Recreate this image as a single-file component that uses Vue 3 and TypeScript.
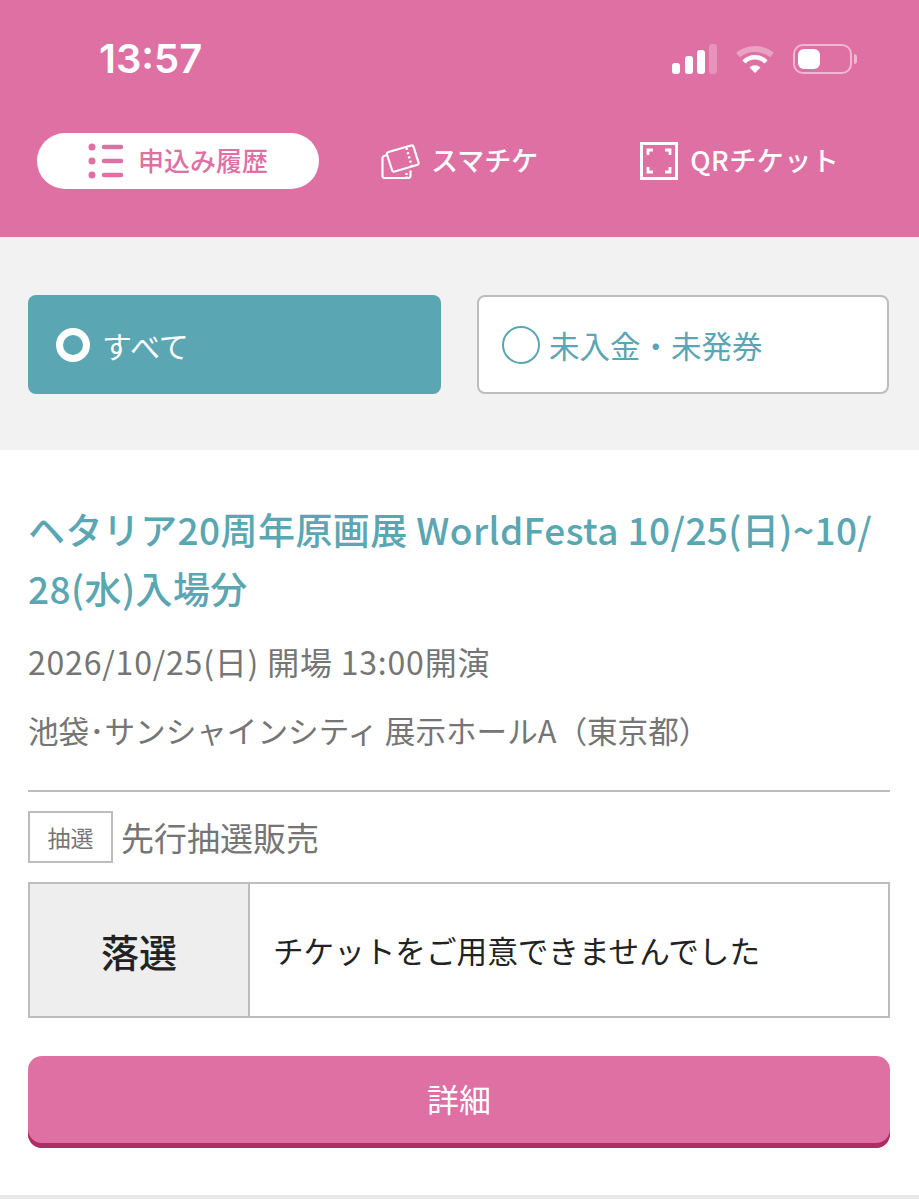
<script setup lang="ts">
const tabs = ['すべて', '未入金・未発券']
</script>

<template>
  <div class="page">
    <header class="head">
      <div class="status">
        <span class="time">13:57</span>
        <div class="status-icons">
          <svg width="45" height="30" viewBox="0 0 45 30">
            <rect x="0" y="19" width="8" height="11" rx="3" fill="#fff" />
            <rect x="13" y="12" width="8" height="18" rx="3" fill="#fff" />
            <rect x="25" y="6" width="8" height="24" rx="3" fill="#fff" />
            <rect x="37" y="0" width="8" height="30" rx="3" fill="#fff" opacity="0.25" />
          </svg>
          <svg width="40" height="30" viewBox="0 0 40 30">
            <path d="M3 11 A27 27 0 0 1 37 11" fill="none" stroke="#fff" stroke-width="6" opacity="0.35" />
            <path d="M9 18 A15 15 0 0 1 31 18" fill="none" stroke="#fff" stroke-width="4.5" />
            <path d="M20 29 L14.5 23.5 A8 8 0 0 1 25.5 23.5 Z" fill="#fff" />
          </svg>
          <div class="battery">
            <div class="battery-body"><div class="battery-level"></div></div>
            <div class="battery-cap"></div>
          </div>
        </div>
      </div>
      <nav class="nav">
        <a class="nav-item active">
          <svg width="36" height="36" viewBox="0 0 36 36">
            <circle cx="4" cy="4" r="3.5" fill="#de70a4" />
            <circle cx="4" cy="18" r="3.5" fill="#de70a4" />
            <circle cx="4" cy="32" r="3.5" fill="#de70a4" />
            <path d="M16 4H33M16 18H33M16 32H33" stroke="#de70a4" stroke-width="4.5" stroke-linecap="round" />
          </svg>
          <span>申込み履歴</span>
        </a>
        <a class="nav-item">
          <svg width="39" height="36" viewBox="0 0 39 36">
            <path d="M6 12 L3 13 Q1.5 13.5 1.5 15 V33 Q1.5 35 3.5 35 H27 Q29.5 35 29.5 33 V27.5" fill="none" stroke="#fff" stroke-width="2.2" stroke-linejoin="round" />
            <path d="M7.5 9 L30 2.5 Q32 2 32.6 4 L37.5 19.5 Q38 21.5 36 22 L13.5 28.5 Q11.5 29 11 27 L6 11.5 Q5.5 9.6 7.5 9 Z" fill="none" stroke="#fff" stroke-width="2.2" stroke-linejoin="round" />
            <path d="M25.5 5 L31 24" stroke="#fff" stroke-width="2.4" stroke-dasharray="2 2.4" fill="none" />
            <path d="M25.5 30 V34.5" stroke="#fff" stroke-width="2.4" stroke-dasharray="2 1.4" fill="none" />
          </svg>
          <span>スマチケ</span>
        </a>
        <a class="nav-item">
          <svg width="38" height="38" viewBox="0 0 38 38">
            <rect x="1.5" y="1.5" width="35" height="35" fill="none" stroke="#fff" stroke-width="3" />
            <path d="M8 13V8H13M25 8H30V13M30 25V30H25M13 30H8V25" fill="none" stroke="#fff" stroke-width="2.8" />
          </svg>
          <span>QRチケット</span>
        </a>
      </nav>
    </header>

    <section class="filter">
      <div class="tab on">
        <span class="radio"></span>
        <span>{{ tabs[0] }}</span>
      </div>
      <div class="tab">
        <span class="radio"></span>
        <span>{{ tabs[1] }}</span>
      </div>
    </section>

    <main class="card">
      <h2 class="title">ヘタリア20周年原画展 WorldFesta 10/25(日)~10/<br />28(水)入場分</h2>
      <p class="date">2026/10/25(日) 開場 13:00開演</p>
      <p class="venue">池袋･サンシャインシティ 展示ホールA（東京都）</p>
      <div class="sale">
        <span class="tag">抽選</span>
        <span class="sale-name">先行抽選販売</span>
      </div>
      <div class="result">
        <div class="result-label">落選</div>
        <div class="result-text">チケットをご用意できませんでした</div>
      </div>
      <button class="detail">詳細</button>
    </main>
    <div class="foot"></div>
  </div>
</template>

<style>
html, body { margin: 0; background: #fff; }
</style>

<style scoped>
.page {
  width: 919px;
  height: 1199px;
  overflow: hidden;
  display: flex;
  flex-direction: column;
  font-family: "Noto Sans CJK JP", "Noto Sans", sans-serif;
}

.head {
  height: 237px;
  box-sizing: border-box;
  background: #de70a4;
  padding-top: 36px;
  color: #fff;
}

.status {
  display: flex;
  justify-content: space-between;
  align-items: center;
  height: 46px;
  padding: 0 62px 0 99px;
}

.time {
  font-family: Inter, "Liberation Sans", sans-serif;
  font-size: 40px;
  font-weight: 600;
  line-height: 46px;
}

.status-icons {
  display: flex;
  align-items: center;
  gap: 18px;
}

.battery {
  display: flex;
  align-items: center;
  gap: 2px;
}

.battery-body {
  width: 59px;
  height: 30px;
  box-sizing: border-box;
  border: 2px solid rgba(255, 255, 255, 0.5);
  border-radius: 10px;
  padding: 3px;
}

.battery-level {
  width: 22px;
  height: 100%;
  background: #fff;
  border-radius: 6px;
}

.battery-cap {
  width: 3px;
  height: 10px;
  background: rgba(255, 255, 255, 0.5);
  border-radius: 0 3px 3px 0;
}

.nav {
  display: flex;
  align-items: center;
  padding-left: 37px;
  margin-top: 51px;
}

.nav-item {
  display: flex;
  align-items: center;
  justify-content: center;
  gap: 14px;
  height: 56px;
  font-size: 27px;
  font-weight: 500;
  white-space: nowrap;
}

.nav-item span {
  padding-bottom: 4px;
}

.nav-item:nth-child(1) { width: 282px; font-size: 26px; }
.nav-item:nth-child(2) { margin-left: 62px; gap: 11px; }
.nav-item:nth-child(3) { margin-left: 102px; gap: 12px; letter-spacing: 0.5px; }

.active {
  background: #fff;
  color: #de70a4;
  border-radius: 28px;
}

.filter {
  height: 213px;
  box-sizing: border-box;
  background: #f2f2f2;
  padding: 58px 30px 0 28px;
  display: flex;
  gap: 36px;
}

.tab {
  flex: 1;
  height: 99px;
  box-sizing: border-box;
  display: flex;
  align-items: center;
  gap: 9px;
  padding-left: 23px;
  border: 2px solid #bdbdbd;
  border-radius: 8px;
  background: #fff;
  color: #5aa6b2;
  font-size: 30.5px;
}

.tab.on {
  padding-left: 28px;
  gap: 12px;
  background: #5aa6b2;
  border: 0;
  color: #fff;
  font-size: 30px;
}

.radio {
  width: 38px;
  height: 38px;
  box-sizing: border-box;
  border: 2px solid #5aa6b2;
  border-radius: 50%;
}

.on .radio {
  width: 34px;
  height: 34px;
  border: 7px solid #fff;
}

.card {
  flex: 1;
  padding: 0 29px 0 28px;
  background: #fff;
}

.title {
  margin: 50px 0 0;
  font-size: 37px;
  letter-spacing: 0.4px;
  line-height: 59px;
  font-weight: 500;
  color: #5aa6b2;
  white-space: nowrap;
}

.date, .venue {
  margin: 0;
  color: #757575;
}

.date {
  margin-top: 18px;
  font-size: 32px;
  letter-spacing: 0.8px;
  line-height: 50px;
}

.venue {
  margin-top: 19px;
  font-size: 30.6px;
  line-height: 50px;
  padding-bottom: 35px;
  border-bottom: 2px solid #bdbdbd;
}

.sale {
  display: flex;
  align-items: center;
  gap: 8px;
  margin-top: 19px;
}

.tag {
  width: 85px;
  height: 52px;
  box-sizing: border-box;
  border: 2px solid #bdbdbd;
  display: flex;
  align-items: center;
  justify-content: center;
  font-size: 23px;
  color: #757575;
}

.sale-name {
  font-size: 33px;
  color: #757575;
}

.result {
  display: flex;
  height: 136px;
  box-sizing: border-box;
  margin-top: 19px;
  border: 2px solid #bdbdbd;
}

.result-label {
  width: 218px;
  display: flex;
  align-items: center;
  justify-content: center;
  background: #eee;
  border-right: 2px solid #bdbdbd;
  font-size: 38px;
  font-weight: 500;
  color: #222;
}

.result-text {
  display: flex;
  align-items: center;
  padding-left: 23px;
  font-size: 30.6px;
  color: #222;
}

.detail {
  display: block;
  width: 100%;
  height: 92px;
  margin-top: 38px;
  padding: 0 0 8px;
  border: 0;
  border-radius: 14px;
  background: #de70a4;
  box-shadow: inset 0 -5px 0 #ad2d64;
  color: #fff;
  font-family: inherit;
  font-size: 32px;
}

.foot {
  height: 4px;
  background: #e8e8e8;
}
</style>
